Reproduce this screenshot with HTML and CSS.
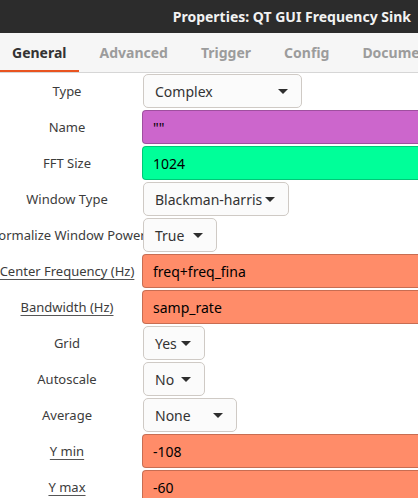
FILE: index.html
```html
<!DOCTYPE html>
<html>
<head>
<meta charset="utf-8">
<link rel="stylesheet" href="styles.css">
</head>
<body>
<header class="titlebar"><span class="title">Properties: QT GUI Frequency Sink</span></header>
<nav class="tabs">
  <div class="tab active">General</div>
  <div class="tab">Advanced</div>
  <div class="tab">Trigger</div>
  <div class="tab">Config</div>
  <div class="tab">Documentation</div>
</nav>
<main class="form">
  <div class="row"><div class="label"><span>Type</span></div><div class="combo w-type"><span>Complex</span><i class="arrow"></i></div></div>
  <div class="row"><div class="label"><span>Name</span></div><div class="entry str">""</div></div>
  <div class="row"><div class="label"><span>FFT Size</span></div><div class="entry int">1024</div></div>
  <div class="row"><div class="label"><span>Window Type</span></div><div class="combo w-window"><span>Blackman-harris</span><i class="arrow"></i></div></div>
  <div class="row"><div class="label"><span>Normalize Window Power</span></div><div class="combo w-true"><span>True</span><i class="arrow"></i></div></div>
  <div class="row"><div class="label"><span class="u">Center Frequency (Hz)</span></div><div class="entry real">freq+freq_fina</div></div>
  <div class="row"><div class="label"><span class="u">Bandwidth (Hz)</span></div><div class="entry real">samp_rate</div></div>
  <div class="row"><div class="label"><span>Grid</span></div><div class="combo w-yes"><span>Yes</span><i class="arrow"></i></div></div>
  <div class="row"><div class="label"><span>Autoscale</span></div><div class="combo w-yes"><span>No</span><i class="arrow"></i></div></div>
  <div class="row"><div class="label"><span>Average</span></div><div class="combo w-avg"><span>None</span><i class="arrow"></i></div></div>
  <div class="row"><div class="label"><span class="u">Y min</span></div><div class="entry real">-108</div></div>
  <div class="row"><div class="label"><span class="u">Y max</span></div><div class="entry real">-60</div></div>
</main>
</body>
</html>
```
FILE: styles.css
```css
html, body {
  margin: 0;
  padding: 0;
  width: 418px;
  height: 498px;
  overflow: hidden;
  background: #ffffff;
  font-family: "Noto Sans", "Open Sans", sans-serif;
}

.titlebar {
  height: 33px;
  background: #2c2c2c;
  display: flex;
  align-items: center;
  justify-content: flex-end;
  padding-right: 7px;
  box-sizing: border-box;
}

.title {
  color: #f2f2f2;
  font-weight: bold;
  font-size: 14px;
  white-space: nowrap;
}

.tabs {
  height: 40px;
  background: #f6f6f6;
  display: flex;
  align-items: stretch;
  border-bottom: 1px solid #d6d6d6;
  box-sizing: border-box;
  white-space: nowrap;
  overflow: hidden;
}

.tab {
  display: flex;
  align-items: center;
  padding: 2px 12px 0;
  margin-right: 9px;
  font-size: 14px;
  font-weight: bold;
  color: #9c9c9c;
  border-bottom: 3px solid transparent;
  margin-bottom: -1px;
}

.tab.active {
  color: #333333;
  border-bottom-color: #e95420;
}

.form {
  display: flex;
  flex-direction: column;
}

.row {
  height: 36px;
  display: grid;
  grid-template-columns: 142px 1fr;
  align-items: center;
}

.label {
  width: 134px;
  display: flex;
  justify-content: center;
  white-space: nowrap;
  font-size: 13px;
  color: #3c3c3c;
}

.label .u {
  text-decoration: underline;
  text-underline-offset: 3px;
  text-decoration-color: #555;
}

.combo {
  position: relative;
  z-index: 1;
  height: 34px;
  margin-left: 1px;
  box-sizing: border-box;
  border: 1px solid #cfcac5;
  border-radius: 5px;
  background: #fbfbfb;
  display: flex;
  align-items: center;
  justify-content: space-between;
  padding: 0 13px 0 11px;
  font-size: 14px;
  color: #333333;
  white-space: nowrap;
}

.w-type { width: 159px; }
.w-window { width: 146px; }
.w-true { width: 74px; }
.w-yes { width: 62px; }
.w-avg { width: 94px; }

.arrow {
  width: 0;
  height: 0;
  border-left: 5px solid transparent;
  border-right: 5px solid transparent;
  border-top: 5px solid #2e2e2e;
}

.entry {
  width: 300px;
  height: 34px;
  box-sizing: border-box;
  border: 1px solid rgba(0, 0, 0, 0.22);
  border-radius: 4px;
  display: flex;
  align-items: center;
  padding-left: 10px;
  font-size: 14px;
  color: #000000;
  white-space: nowrap;
}

.str { background: #cc66cc; }
.int { background: #00ff99; }
.real { background: #ff8c69; }
```
